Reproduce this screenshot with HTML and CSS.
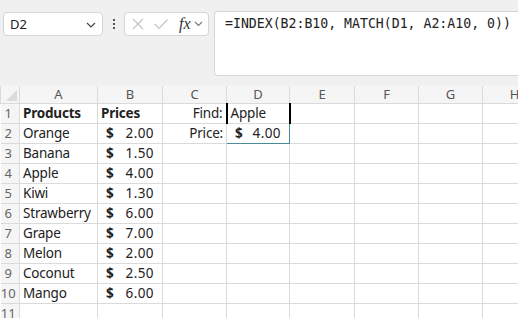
FILE: index.html
```html
<!DOCTYPE html>
<html>
<head>
<meta charset="utf-8">
<link rel="stylesheet" href="styles.css">
</head>
<body>
<div class="app">
  <div class="fbar">
    <div class="namebox">
      <span class="nb-text">D2</span>
      <svg class="chev" width="10" height="6" viewBox="0 0 10 6"><path d="M1 1 L5 5 L9 1" fill="none" stroke="#444" stroke-width="1.2"/></svg>
    </div>
    <div class="dots"><i></i><i></i><i></i></div>
    <div class="fxbox">
      <svg class="ico" width="14" height="14" viewBox="0 0 14 14"><path d="M2 2 L12 12 M12 2 L2 12" stroke="#c4c4c4" stroke-width="1.2" fill="none"/></svg>
      <svg class="ico" width="16" height="14" viewBox="0 0 16 14"><path d="M1.5 7 L6 11.5 L14.5 2.5" stroke="#c4c4c4" stroke-width="1.2" fill="none"/></svg>
      <span class="fx">fx</span>
      <svg class="chev2" width="9" height="6" viewBox="0 0 9 6"><path d="M1 1 L4.5 4.5 L8 1" fill="none" stroke="#777" stroke-width="1.1"/></svg>
    </div>
    <div class="formula">=INDEX(B2:B10, MATCH(D1, A2:A10, 0))</div>
  </div>
  <div class="grid-wrap">
  <table class="sheet">
    <colgroup>
      <col class="c-rh"><col class="c-a"><col class="c-b"><col class="c-c"><col class="c-d"><col class="c-e"><col class="c-f"><col class="c-g"><col class="c-h">
    </colgroup>
    <tr class="hdr">
      <th class="corner"><span class="tri"></span></th><th>A</th><th>B</th><th>C</th><th>D</th><th>E</th><th>F</th><th>G</th><th>H</th>
    </tr>
    <tr><th class="rn">1</th><td class="b">Products</td><td class="b">Prices</td><td class="r">Find:</td><td class="find">Apple</td><td></td><td></td><td></td><td></td></tr>
    <tr><th class="rn">2</th><td>Orange</td><td><div class="cur"><span>$</span><span>2.00</span></div></td><td class="r">Price:</td><td class="sel"><div class="cur"><span>$</span><span>4.00</span></div></td><td></td><td></td><td></td><td></td></tr>
    <tr><th class="rn">3</th><td>Banana</td><td><div class="cur"><span>$</span><span>1.50</span></div></td><td></td><td></td><td></td><td></td><td></td><td></td></tr>
    <tr><th class="rn">4</th><td>Apple</td><td><div class="cur"><span>$</span><span>4.00</span></div></td><td></td><td></td><td></td><td></td><td></td><td></td></tr>
    <tr><th class="rn">5</th><td>Kiwi</td><td><div class="cur"><span>$</span><span>1.30</span></div></td><td></td><td></td><td></td><td></td><td></td><td></td></tr>
    <tr><th class="rn">6</th><td>Strawberry</td><td><div class="cur"><span>$</span><span>6.00</span></div></td><td></td><td></td><td></td><td></td><td></td><td></td></tr>
    <tr><th class="rn">7</th><td>Grape</td><td><div class="cur"><span>$</span><span>7.00</span></div></td><td></td><td></td><td></td><td></td><td></td><td></td></tr>
    <tr><th class="rn">8</th><td>Melon</td><td><div class="cur"><span>$</span><span>2.00</span></div></td><td></td><td></td><td></td><td></td><td></td><td></td></tr>
    <tr><th class="rn">9</th><td>Coconut</td><td><div class="cur"><span>$</span><span>2.50</span></div></td><td></td><td></td><td></td><td></td><td></td><td></td></tr>
    <tr><th class="rn">10</th><td>Mango</td><td><div class="cur"><span>$</span><span>6.00</span></div></td><td></td><td></td><td></td><td></td><td></td><td></td></tr>
    <tr><th class="rn">11</th><td></td><td></td><td></td><td></td><td></td><td></td><td></td><td></td></tr>
  </table>
  </div>
</div>
</body>
</html>
```
FILE: styles.css
```css
html, body { margin: 0; padding: 0; }
body {
  width: 518px; height: 318px; overflow: hidden;
  background: #f0f0f0;
  font-family: "Noto Sans", "Liberation Sans", sans-serif;
  color: #222;
}
.app { width: 518px; height: 318px; overflow: hidden; }
.fbar {
  display: flex; align-items: flex-start;
  height: 86px; box-sizing: border-box;
  padding: 12px 0 0 3px;
}
.namebox {
  width: 100px; height: 24px; box-sizing: border-box;
  background: #fff; border: 1px solid #d6d6d6; border-radius: 4px;
  display: flex; align-items: center; justify-content: space-between;
  padding: 0 6px 0 6px;
  font-size: 13px; color: #222;
}
.chev { margin-top: 1px; }
.dots {
  width: 21px; height: 24px;
  display: flex; flex-direction: column; align-items: center; justify-content: center; gap: 2px;
}
.dots i { width: 2px; height: 2px; background: #555; display: block; }
.fxbox {
  width: 85px; height: 24px; box-sizing: border-box;
  background: #fff; border: 1px solid #d6d6d6; border-radius: 4px;
  display: flex; align-items: center; padding: 0 3px 0 6px; gap: 8px;
}
.fx {
  font-family: "Liberation Serif", serif; font-style: italic;
  font-size: 16px; color: #333; margin-left: 2px;
}
.chev2 { margin-left: -5px; }
.formula {
  flex: 1; margin-left: 5px; margin-top: -1px;
  height: 65px; box-sizing: border-box;
  background: #fff; border: 1px solid #d6d6d6; border-right: none;
  border-radius: 4px 0 0 4px;
  padding: 4px 0 0 10px;
  font-family: "DejaVu Sans Mono", monospace; font-size: 13.2px; color: #222;
  white-space: nowrap; overflow: hidden;
}
.grid-wrap { width: 518px; overflow: hidden; }
.sheet {
  border-collapse: collapse; table-layout: fixed;
  width: 546px; background: #fff;
  font-size: 13.5px; letter-spacing: -0.2px;
}
.c-rh { width: 19px; }
.c-a { width: 78px; }
.c-b { width: 65px; }
.c-c { width: 64px; }
.c-d { width: 63px; }
.c-e { width: 65px; }
.c-f { width: 64px; }
.c-g { width: 64px; }
.c-h { width: 64px; }
.sheet tr { height: 20px; }
.sheet tr.hdr { height: 17px; }
.sheet td, .sheet th {
  border: 1px solid #dadada; padding: 0 3px; height: 20px;
  white-space: nowrap; overflow: hidden; box-sizing: border-box;
  line-height: 18px;
}
.hdr th {
  height: 17px; background: #f5f5f5; font-weight: normal;
  color: #555; font-size: 13px; line-height: 15px; border-top: none;
  letter-spacing: 0;
}
.sheet th.rn {
  background: #f5f5f5; font-weight: normal; color: #666; font-size: 13px;
  text-align: center; padding: 0 3px 0 0; border-left: none; letter-spacing: 0;
}
.corner { position: relative; border-left: none; }
.tri {
  position: absolute; right: 2px; bottom: 2px; width: 0; height: 0;
  border-left: 11px solid transparent; border-bottom: 11px solid #dcdcdc;
}
.b { font-weight: bold; }
.r { text-align: right; }
.find { border-left: 2px solid #000 !important; border-right: 2px solid #000 !important; padding-left: 2px; }
.sel { border: 1px solid #4a8c96 !important; }
.cur { display: flex; justify-content: space-between; padding: 0 5px 0 5px; letter-spacing: 0.4px; }
.cur span:first-child { font-weight: bold; }
```
